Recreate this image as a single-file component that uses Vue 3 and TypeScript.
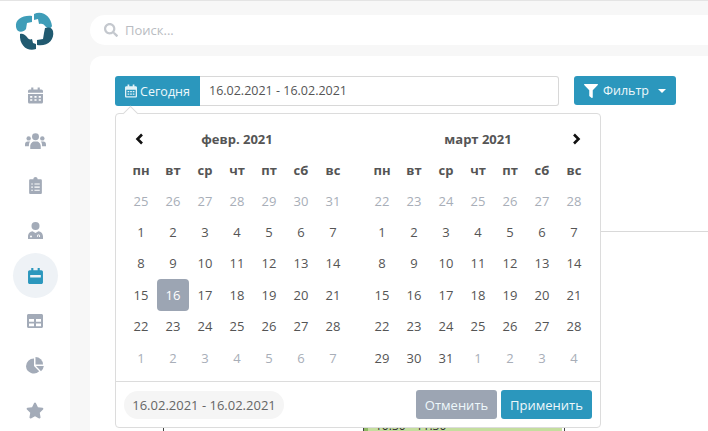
<script setup lang="ts">
const weekdays = ['пн', 'вт', 'ср', 'чт', 'пт', 'сб', 'вс'];

interface Day {
  label: number;
  off?: boolean;
  active?: boolean;
}

const range = (from: number, to: number, off = false): Day[] => {
  const out: Day[] = [];
  for (let i = from; i <= to; i++) out.push({ label: i, off });
  return out;
};

const febDays = [...range(25, 31, true), ...range(1, 28), ...range(1, 7, true)].map((d) =>
  d.label === 16 && !d.off ? { ...d, active: true } : d,
);
const marDays = [...range(22, 28, true), ...range(1, 31), ...range(1, 4, true)];

const months = [
  { title: 'февр. 2021', days: febDays, prev: true, next: false },
  { title: 'март 2021', days: marDays, prev: false, next: true },
];
</script>

<template>
  <div class="app">
    <aside class="sidebar">
      <svg class="logo" viewBox="16 12 40 40">
        <path fill="#3f9db8" d="M17 27C16 19 24 15 33 16L33 22L28 23L27 29C24 33 18 33 17 27Z" />
        <path fill="#3f9db8" d="M35 14C44 10 52 17 53 26C52 29 49 29 47 27C45 24 43 23 40 24L39 19L35 20Z" />
        <path fill="#215a70" d="M21 34C24 33 26 35 28 37C29 39 31 40 33 39L34 43L37 44L37 49C29 52 20 46 21 34Z" />
        <path fill="#215a70" d="M46 28C49 27 53 27 54 31C56 40 48 47 38 45L38 40L44 39L45 33Z" />
      </svg>

      <nav class="menu">
        <a class="item">
          <svg viewBox="0 0 14 15" class="ico"><path fill="#a3abb8" d="M3 0h2v2h4V0h2v2h1.500c.8 0 1.500.7 1.500 1.500V5H0V3.500C0 2.700.7 2 1.500 2H3zM0 6h14v7.500c0 .8-.7 1.500-1.500 1.500h-11C.7 15 0 14.300 0 13.500zm2 2v1.500h2V8zm4 0v1.500h2V8zm4 0v1.500h2V8zm-8 3v1.500h2V11zm4 0v1.500h2V11zm4 0v1.500h2V11z" /></svg>
        </a>
        <a class="item">
          <svg viewBox="0 0 20 15" class="ico users"><g fill="#a3abb8"><circle cx="10" cy="3.500" r="3.300" /><circle cx="3.500" cy="5" r="2.100" /><circle cx="16.500" cy="5" r="2.100" /><path d="M5 15v-2.500C5 10 7 8 9 8h2c2 0 4 2 4 4.500V15zM0 11c0-2 1-3 2.500-3H5c-1 1-1.200 2-1.300 4.500H0zM20 11c0-2-1-3-2.500-3H15c1 1 1.200 2 1.300 4.500H20z" /></g></svg>
        </a>
        <a class="item">
          <svg viewBox="0 0 12 16" class="ico"><path fill="#a3abb8" fill-rule="evenodd" d="M1.200 2H4c0-1.100.9-2 2-2s2 .9 2 2h2.800C11.500 2 12 2.500 12 3.200v11.600c0 .7-.5 1.200-1.200 1.200H1.200C.5 16 0 15.500 0 14.800V3.200C0 2.500.5 2 1.200 2zM5 6v1h5V6zm0 3v1h5V9zm0 3v1h5v-1zM2 6v1h1.500V6zm0 3v1h1.500V9zm0 3v1h1.500v-1z" /></svg>
        </a>
        <a class="item">
          <svg viewBox="0 0 15 17" class="ico"><g fill="#a3abb8"><circle cx="7.500" cy="4" r="4" /><path fill-rule="evenodd" d="M0 17v-2.500C0 11.500 2.200 9.500 4.500 9.300L7.500 11l3-1.700c2.300.2 4.500 2.200 4.500 5.200V17zM3 13.500a1 1 0 1 0 0 2 1 1 0 0 0 0-2zm7.800 1.500h1.200v-1c0-.8-.6-1.500-1.500-1.500s-1.500.7-1.500 1.500v1h.8v-1c0-.4.300-.7.700-.7s.7.300.7.700z" /></g></svg>
        </a>
        <a class="item active">
          <svg viewBox="0 0 14 15" class="ico big"><path fill="#2b97bd" fill-rule="evenodd" d="M3 0h2v2h4V0h2v2h1.500c.8 0 1.500.7 1.500 1.500v10c0 .8-.7 1.500-1.500 1.500h-11C.7 15 0 14.300 0 13.500v-10C0 2.700.7 2 1.500 2H3zM2 6.500V9h10V6.500z" /></svg>
        </a>
        <a class="item">
          <svg viewBox="0 0 16 14" class="ico table"><path fill="#a3abb8" fill-rule="evenodd" d="M1.500 0h13c.8 0 1.500.7 1.500 1.500v11c0 .8-.7 1.500-1.500 1.500h-13C.7 14 0 13.300 0 12.500v-11C0 .7.700 0 1.500 0zM2 5v2.800h5V5zm7 0v2.800h5V5zm-7 4.500v2.800h5V9.500zm7 0v2.800h5V9.500z" /></svg>
        </a>
        <a class="item">
          <svg viewBox="0 0 18 17" class="ico wide"><g fill="#a3abb8"><path d="M8 1.500V9l5.200 5.300A7.800 7.800 0 0 1 0 9.300 7.800 7.800 0 0 1 8 1.500z" /><path d="M9.500 0a7.500 7.500 0 0 1 7.500 7.500H9.500z" /><path d="M10 9h7.800a7.800 7.800 0 0 1-2.800 5.200z" /></g></svg>
        </a>
        <a class="item">
          <svg viewBox="0 0 576 512" class="ico wide"><path fill="#a3abb8" d="M259.300 17.800L194 150.200 47.900 171.500c-26.200 3.800-36.700 36.100-17.700 54.600l105.700 103-25 145.500c-4.500 26.300 23.200 46 46.400 33.700L288 439.600l130.700 68.700c23.200 12.200 50.900-7.400 46.400-33.700l-25-145.500 105.700-103c19-18.500 8.500-50.800-17.700-54.600L382 150.200 316.700 17.800c-11.700-23.600-45.600-23.900-57.400 0z" /></svg>
        </a>
      </nav>
    </aside>

    <main class="main">
      <div class="search">
        <svg viewBox="0 0 512 512" class="search-ico"><path fill="#c4c8ce" d="M505 442.700L405.300 343c-4.500-4.500-10.600-7-17-7H372c27.600-35.300 44-79.700 44-128C416 93.100 322.900 0 208 0S0 93.100 0 208s93.100 208 208 208c48.300 0 92.700-16.400 128-44v16.300c0 6.400 2.500 12.500 7 17l99.700 99.700c9.400 9.400 24.600 9.400 33.900 0l28.300-28.300c9.400-9.400 9.400-24.600.1-34zM208 336c-70.700 0-128-57.200-128-128 0-70.700 57.200-128 128-128 70.700 0 128 57.200 128 128 0 70.700-57.200 128-128 128z" /></svg>
        <span>Поиск...</span>
      </div>

      <section class="card">
        <div class="toolbar">
          <div class="range-group">
            <button class="today">
              <svg viewBox="0 0 14 15" class="today-ico"><path fill="#e2f2f7" fill-rule="evenodd" d="M3 0h2v2h4V0h2v2h1.500c.8 0 1.500.7 1.500 1.500v10c0 .8-.7 1.500-1.500 1.500h-11C.7 15 0 14.300 0 13.500v-10C0 2.700.7 2 1.500 2H3zM1.500 6v7.500h11V6zM3 7.500h2V9H3zm3 0h2V9H6zm3 0h2V9H9zm-6 3h2V12H3zm3 0h2V12H6zm3 0h2V12H9z" /></svg>
              Сегодня
            </button>
            <div class="range-input">16.02.2021 - 16.02.2021</div>
          </div>
          <button class="filter">
            <svg viewBox="0 0 512 512" class="filter-ico"><path fill="#fff" d="M487.976 0H24.028C2.710 0-8.047 25.866 7.058 40.971L192 225.941V432c0 7.831 3.821 15.170 10.237 19.662l80 55.980C298.020 518.690 320 507.493 320 487.980V225.941l184.947-184.970C520.021 25.896 509.338 0 487.976 0z" /></svg>
            Фильтр
            <i class="caret"></i>
          </button>
        </div>

        <div class="schedule">
          <div class="sched-body">
            <div class="sched-col first"></div>
            <div class="sched-col">
              <div class="event">10:30 - 11:30</div>
            </div>
          </div>
        </div>

        <div class="picker">
          <div class="calendars">
            <div v-for="m in months" :key="m.title" class="month">
              <div class="month-head">
                <span class="nav prev">
                  <svg v-if="m.prev" viewBox="0 0 9 12" class="chev"><path d="M7 1.500L2.500 6 7 10.500" /></svg>
                </span>
                <span class="title">{{ m.title }}</span>
                <span class="nav next">
                  <svg v-if="m.next" viewBox="0 0 9 12" class="chev"><path d="M2 1.500L6.500 6 2 10.500" /></svg>
                </span>
              </div>
              <div class="grid">
                <div v-for="w in weekdays" :key="w" class="wd">{{ w }}</div>
                <div
                  v-for="(d, i) in m.days"
                  :key="i"
                  class="day"
                  :class="{ off: d.off, active: d.active }"
                >
                  {{ d.label }}
                </div>
              </div>
            </div>
          </div>
          <div class="picker-foot">
            <span class="picked">16.02.2021 - 16.02.2021</span>
            <div class="actions">
              <button class="btn cancel">Отменить</button>
              <button class="btn apply">Применить</button>
            </div>
          </div>
        </div>
      </section>
    </main>
  </div>
</template>

<style>
html,
body {
  margin: 0;
  height: 100%;
  overflow: hidden;
  background: #fff;
}
</style>

<style scoped>
.app {
  display: flex;
  width: 708px;
  height: 431px;
  overflow: hidden;
  border-top: 1px solid #e4e4e4;
  box-sizing: border-box;
  background: #f7f7f7;
  font-family: 'Open Sans', 'Liberation Sans', sans-serif;
  font-size: 13px;
  color: #555;
}

.sidebar {
  width: 70px;
  flex: none;
  background: #fff;
  display: flex;
  flex-direction: column;
  align-items: center;
}

.logo {
  width: 40px;
  height: 40px;
  margin-top: 11px;
  flex: none;
}

.menu {
  display: flex;
  flex-direction: column;
  align-items: center;
  margin-top: 21px;
}

.item {
  width: 45px;
  height: 45px;
  border-radius: 50%;
  display: flex;
  align-items: center;
  justify-content: center;
}

.item.active {
  background: #eef2f6;
}

.ico {
  width: 15px;
  height: 17px;
  display: block;
}

.ico.wide {
  width: 18px;
  height: 17px;
}

.ico.users {
  width: 21px;
  height: 16px;
}

.ico.big {
  width: 15px;
  height: 16px;
}

.ico.table {
  width: 16px;
  height: 14px;
}

.main {
  flex: 1;
  min-width: 0;
  padding: 14px 0 0 20px;
  display: flex;
  flex-direction: column;
}

.search {
  height: 30px;
  background: #fff;
  border-radius: 15px 0 0 15px;
  display: flex;
  align-items: center;
  padding-left: 14px;
  gap: 7px;
  color: #b9bcc2;
  font-size: 13px;
  flex: none;
}

.search-ico {
  width: 14px;
  height: 14px;
}

.card {
  position: relative;
  margin-top: 11px;
  flex: 1;
  background: #fff;
  border-radius: 12px 0 0 0;
  padding: 20px 32px 0 25px;
}

.toolbar {
  display: flex;
  align-items: flex-start;
  justify-content: space-between;
}

.range-group {
  display: flex;
  width: 444px;
  height: 30px;
}

.today {
  width: 85px;
  flex: none;
  background: #2b97bd;
  color: #eef8fb;
  border: none;
  border-radius: 3px 0 0 3px;
  font: inherit;
  font-size: 12.500px;
  padding: 0;
  display: flex;
  align-items: center;
  justify-content: center;
  gap: 3px;
}

.today-ico {
  width: 12px;
  height: 14px;
}

.range-input {
  flex: 1;
  border: 1px solid #d8d8d8;
  border-left: none;
  border-radius: 0 3px 3px 0;
  display: flex;
  align-items: center;
  padding-left: 9px;
  font-size: 12.500px;
  color: #555;
  line-height: 1;
}

.filter {
  width: 102px;
  height: 29px;
  background: #2b97bd;
  color: #eef8fb;
  border: none;
  border-radius: 3px;
  font: inherit;
  font-size: 12.500px;
  padding: 0 0 0 10px;
  display: flex;
  align-items: center;
  gap: 5px;
}

.filter-ico {
  width: 14px;
  height: 14px;
}

.caret {
  width: 0;
  height: 0;
  margin-left: 4px;
  border-left: 4px solid transparent;
  border-right: 4px solid transparent;
  border-top: 4px solid #fff;
}

.schedule {
  margin-top: 125px;
  margin-right: -32px;
  height: 300px;
  border-top: 1px solid #d9d9d9;
}

.sched-body {
  display: flex;
  height: 100%;
  margin-left: 48px;
}

.sched-col {
  width: 200px;
  border-left: 1px solid #444;
  border-right: 1px solid #444;
  position: relative;
}

.sched-col.first {
  width: 199px;
  border-right: none;
}

.event {
  position: absolute;
  top: 188px;
  left: 0;
  width: 198px;
  height: 30px;
  box-sizing: border-box;
  background: #c5de9f;
  border-left: 4px solid #8fb865;
  padding-left: 7px;
  font-size: 12px;
  line-height: 12px;
  color: #333;
}

.picker {
  position: absolute;
  left: 25px;
  top: 57px;
  width: 486px;
  height: 315px;
  box-sizing: border-box;
  background: #fff;
  border: 1px solid #dcdcdc;
  border-radius: 4px;
  display: flex;
  flex-direction: column;
}

.picker::before {
  content: '';
  position: absolute;
  left: 9px;
  top: -6px;
  width: 10px;
  height: 10px;
  background: #fff;
  border-left: 1px solid #dcdcdc;
  border-top: 1px solid #dcdcdc;
  transform: rotate(45deg);
}

.calendars {
  display: flex;
  gap: 17px;
  padding: 9px 0 0 9px;
  height: 258px;
  flex: none;
}

.month {
  width: 224px;
}

.month-head {
  display: flex;
  align-items: center;
  justify-content: space-between;
  height: 31px;
  color: #555;
  font-weight: 700;
  font-size: 13px;
}

.nav {
  width: 32px;
  display: flex;
  align-items: center;
  justify-content: center;
}

.nav.prev .chev {
  margin-right: 3px;
}

.nav.next .chev {
  margin-left: 6px;
}

.chev {
  width: 9px;
  height: 12px;
  fill: none;
  stroke: #111;
  stroke-width: 2.600;
}

.grid {
  display: grid;
  grid-template-columns: repeat(7, 32px);
  grid-template-rows: 31px;
  grid-auto-rows: 31.400px;
}

.wd {
  display: flex;
  align-items: center;
  justify-content: center;
  font-weight: 700;
  font-size: 13px;
  color: #555;
}

.day {
  display: flex;
  align-items: center;
  justify-content: center;
  font-size: 13px;
  color: #555;
  border-radius: 4px;
}

.day.off {
  color: #a8aeb8;
}

.day.active {
  background: #9ca5b3;
  color: #fff;
  font-weight: 500;
}

.picker-foot {
  flex: 1;
  border-top: 1px solid #dcdcdc;
  display: flex;
  align-items: center;
  justify-content: space-between;
  padding: 0 8px;
}

.picked {
  height: 28px;
  width: 160px;
  background: #f5f5f5;
  border-radius: 14px;
  display: flex;
  align-items: center;
  justify-content: center;
  font-size: 13px;
  color: #666;
}

.actions {
  display: flex;
  gap: 4px;
}

.btn {
  height: 29px;
  border: none;
  border-radius: 3px;
  font: inherit;
  font-size: 13px;
  color: #eef8fb;
  padding: 0;
}

.btn.cancel {
  width: 81px;
  background: #9ca5b3;
}

.btn.apply {
  width: 91px;
  background: #2b97bd;
}
</style>
